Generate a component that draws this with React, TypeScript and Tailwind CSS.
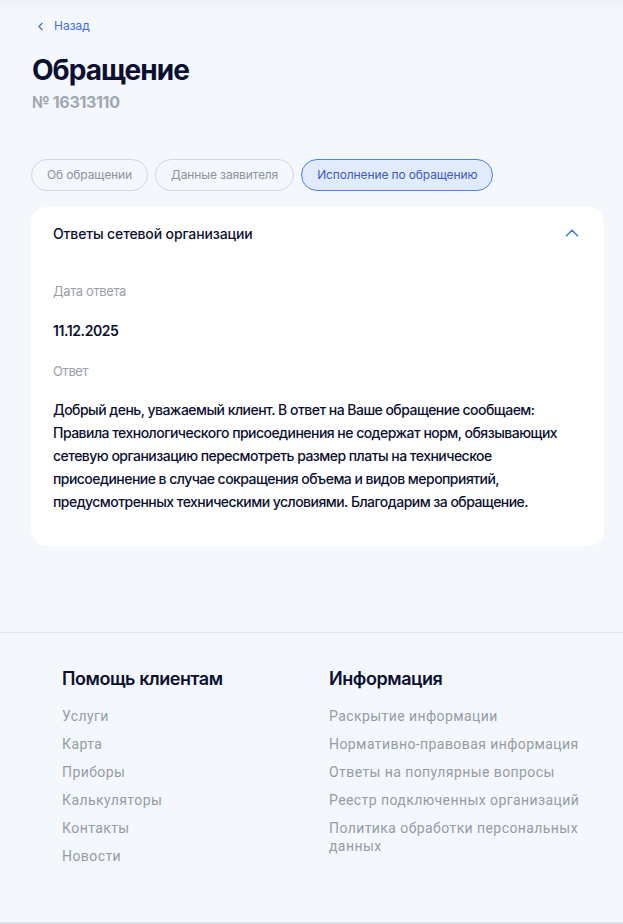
import { ChevronLeft, ChevronUp } from "lucide-react";

const tabs = [
  { label: "Об обращении", active: false },
  { label: "Данные заявителя", active: false },
  { label: "Исполнение по обращению", active: true },
];

const helpLinks = ["Услуги", "Карта", "Приборы", "Калькуляторы", "Контакты", "Новости"];
const infoLinks = [
  "Раскрытие информации",
  "Нормативно-правовая информация",
  "Ответы на популярные вопросы",
  "Реестр подключенных организаций",
  "Политика обработки персональных данных",
];

function FooterColumn({ title, links, className }: { title: string; links: string[]; className?: string }) {
  return (
    <div className={className}>
      <h3 className="text-[18px] font-semibold leading-6 tracking-[-0.025em] text-[#0b1030]">{title}</h3>
      <ul className="mt-[16px] flex flex-col gap-[10px] font-['Roboto',sans-serif] text-[14px] leading-[18px] tracking-[0.03em] text-[#959ca6]">
        {links.map((link) => (
          <li key={link}>
            <a href="#">{link}</a>
          </li>
        ))}
      </ul>
    </div>
  );
}

export default function App() {
  return (
    <div className="min-h-[924px] bg-[#f4f7fc] font-['Inter',sans-serif] text-[#0b1030]">
      <main className="bg-gradient-to-b from-[#eef1f8] to-[#f4f7fc] to-[12px] pb-[86px] pl-[31px] pr-[19px] pt-[16px]">
        <a href="#" className="flex h-5 items-center gap-[7px] pl-[3px] text-[12px] text-[#3c6fe4]">
          <ChevronLeft className="size-[13px]" strokeWidth={2.2} />
          Назад
        </a>

        <h1 className="mt-[17px] pl-px text-[28px] font-bold leading-[34px] tracking-[-0.035em] text-[#0b1030]">Обращение</h1>
        <p className="mt-[5px] pl-px text-[16px] font-bold leading-5 tracking-[-0.02em] text-[#a1a7b0]">№ 16313110</p>

        <div className="mt-[47px] flex gap-[7px]">
          {tabs.map((tab) => (
            <button
              key={tab.label}
              className={
                tab.active
                  ? "h-8 rounded-full border border-[#4683f4] bg-[#e2ebfc] px-[15px] text-[12px] tracking-[-0.01em] text-[#3d58cb]"
                  : "h-8 rounded-full border border-[#d3d8e0] bg-[#f4f7fc] px-[15px] text-[12px] tracking-[-0.01em] text-[#8c939d]"
              }
            >
              {tab.label}
            </button>
          ))}
        </div>

        <section className="mt-4 rounded-2xl bg-white px-[22px] pb-[33px] pt-[16px]">
          <div className="flex h-[20px] items-center justify-between">
            <h2 className="text-[14px] font-medium tracking-[-0.01em] text-[#0b1030]">Ответы сетевой организации</h2>
            <ChevronUp className="-mr-[1px] size-[22px] text-[#3c74ec]" strokeWidth={1.6} />
          </div>

          <div className="mt-[38px] text-[13px] leading-5 tracking-[-0.03em] text-[#9aa0a9]">Дата ответа</div>
          <div className="mt-[20px] text-[14px] font-semibold leading-5 tracking-[-0.03em]">11.12.2025</div>
          <div className="mt-[20px] text-[13px] leading-5 tracking-[-0.03em] text-[#9aa0a9]">Ответ</div>
          <p className="mt-[17px] text-[14px] font-medium leading-[23px] tracking-[-0.038em] text-[#0b1030]">
            Добрый день, уважаемый клиент. В ответ на Ваше обращение сообщаем: Правила технологического
            присоединения не содержат норм, обязывающих сетевую организацию пересмотреть размер платы на
            техническое присоединение в случае сокращения объема и видов мероприятий, предусмотренных
            техническими условиями. Благодарим за обращение.
          </p>
        </section>
      </main>

      <footer className="flex border-t border-[#e1e8f4] pb-[57px] pl-[62px] pt-[34px]">
        <FooterColumn title="Помощь клиентам" links={helpLinks} className="w-[267px]" />
        <FooterColumn title="Информация" links={infoLinks} className="w-[262px]" />
      </footer>
      <div className="h-[2px] bg-[#dde2e9]" />
    </div>
  );
}
